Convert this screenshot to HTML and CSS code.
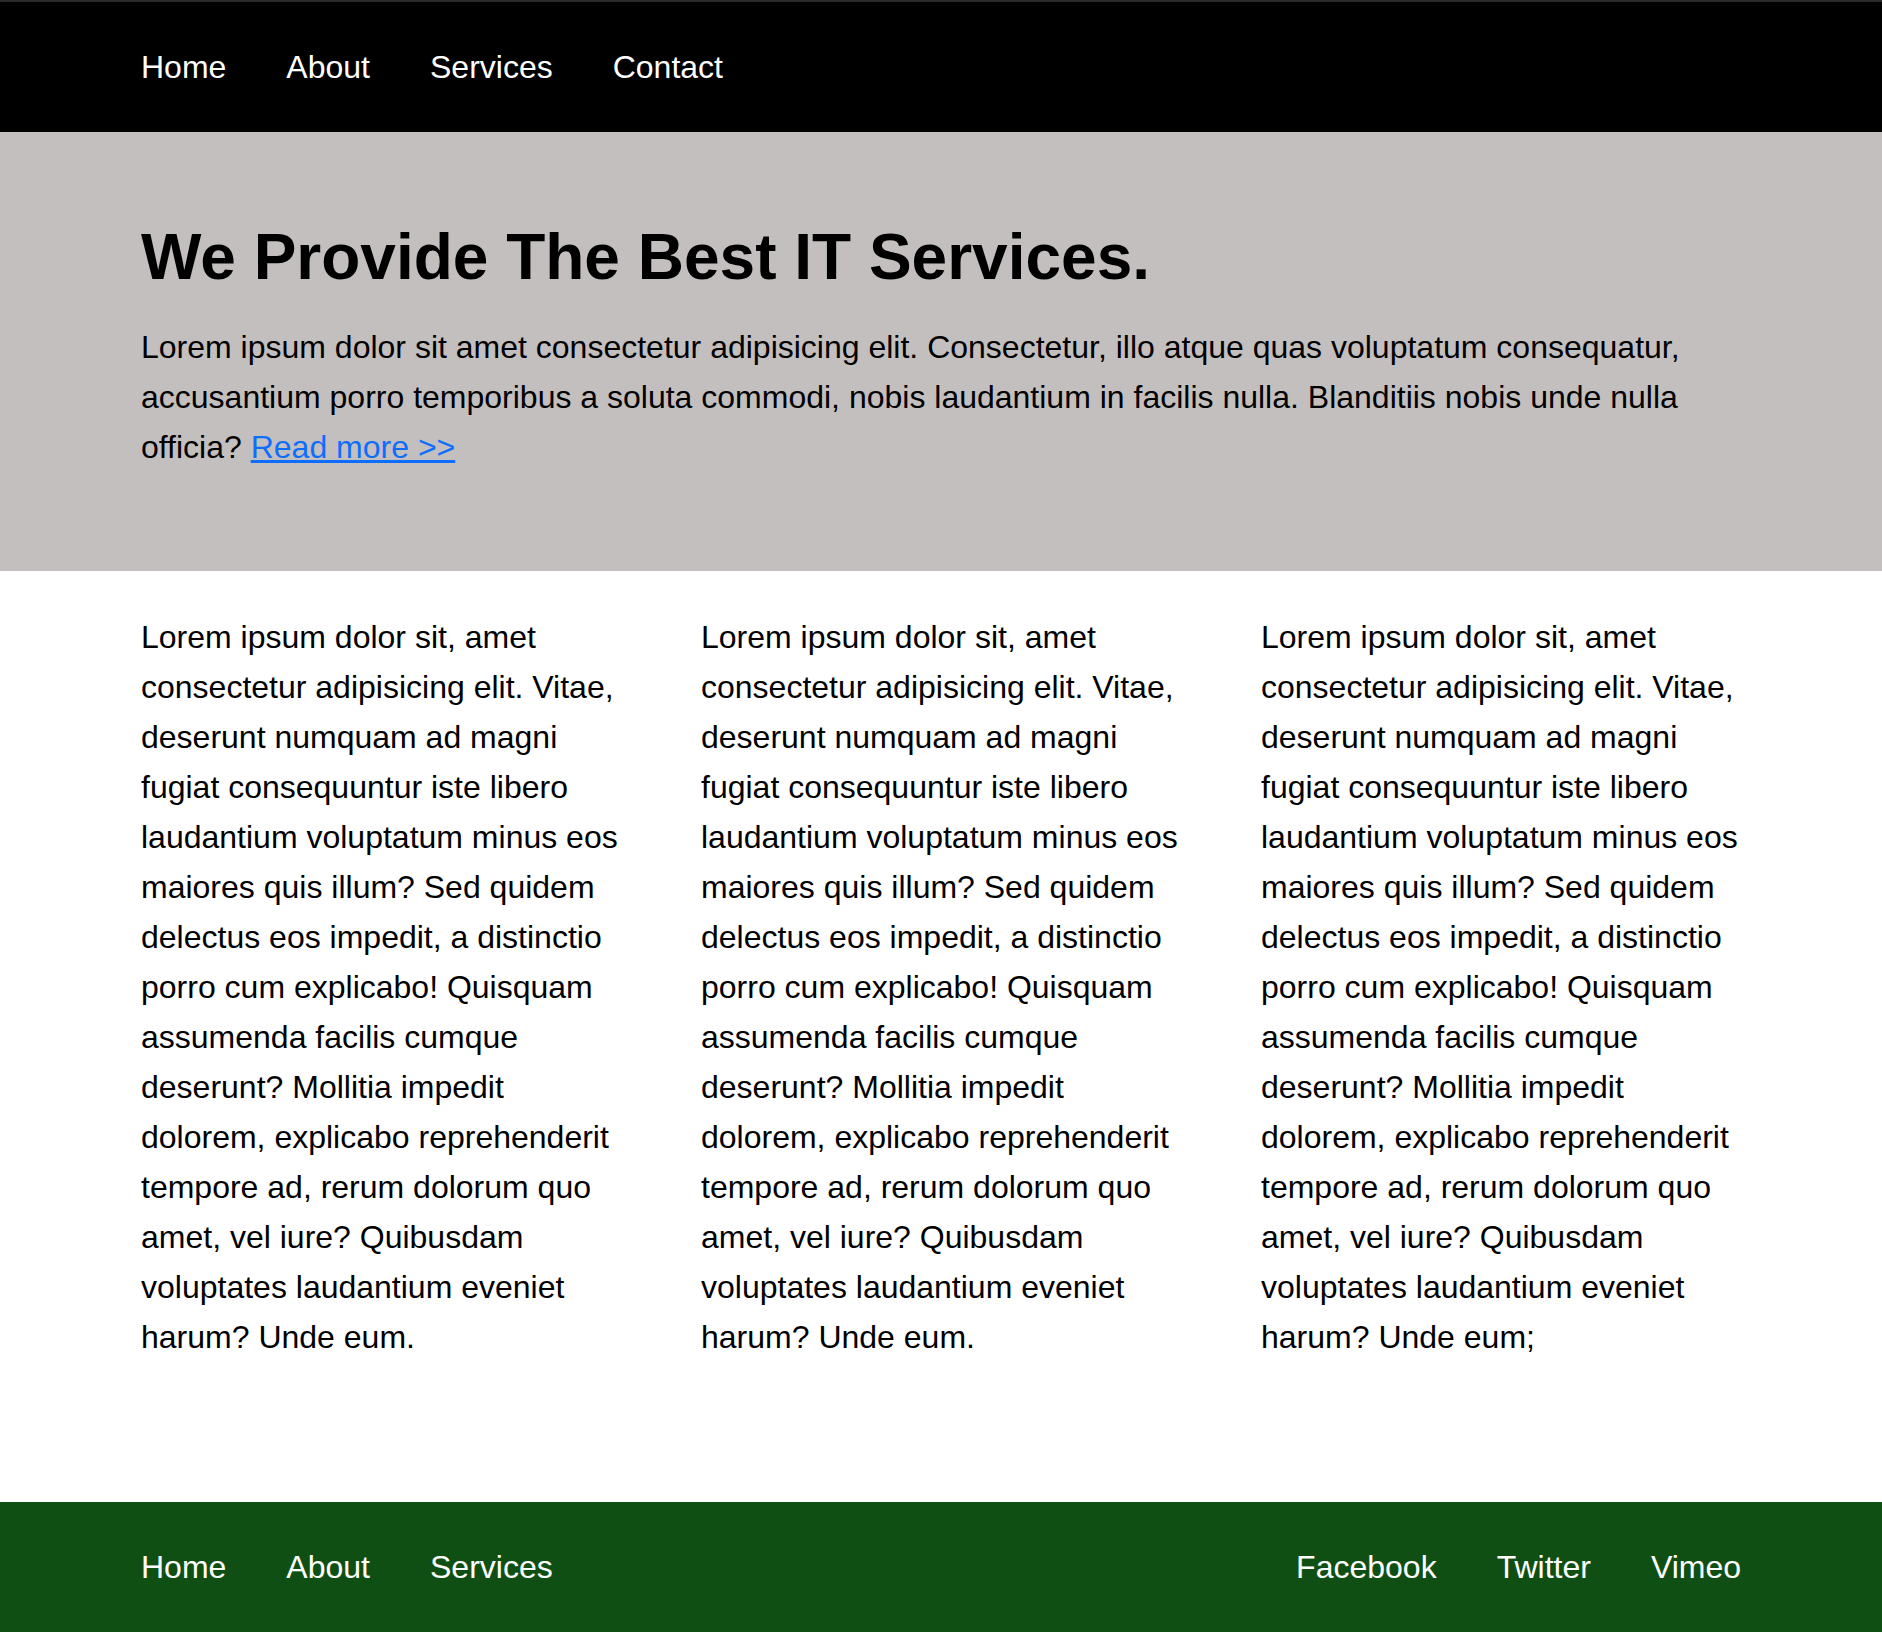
FILE: index.html
```html
<!DOCTYPE html>
<html lang="en">
<head>
<meta charset="utf-8">
<title>IT Services</title>
<link rel="stylesheet" href="styles.css">
</head>
<body>
<header class="topbar">
  <nav class="container nav">
    <a href="#">Home</a>
    <a href="#">About</a>
    <a href="#">Services</a>
    <a href="#">Contact</a>
  </nav>
</header>
<section class="hero">
  <div class="container">
    <h1 class="hero-title">We Provide The Best IT Services.</h1>
    <p class="hero-text">Lorem ipsum dolor sit amet consectetur adipisicing elit. Consectetur, illo atque quas voluptatum consequatur, accusantium porro temporibus a soluta commodi, nobis laudantium in facilis nulla. Blanditiis nobis unde nulla officia? <a class="read-more" href="#">Read more &gt;&gt;</a></p>
  </div>
</section>
<main class="container columns">
  <p class="col">Lorem ipsum dolor sit, amet consectetur adipisicing elit. Vitae, deserunt numquam ad magni fugiat consequuntur iste libero laudantium voluptatum minus eos maiores quis illum? Sed quidem delectus eos impedit, a distinctio porro cum explicabo! Quisquam assumenda facilis cumque deserunt? Mollitia impedit dolorem, explicabo reprehenderit tempore ad, rerum dolorum quo amet, vel iure? Quibusdam voluptates laudantium eveniet harum? Unde eum.</p>
  <p class="col">Lorem ipsum dolor sit, amet consectetur adipisicing elit. Vitae, deserunt numquam ad magni fugiat consequuntur iste libero laudantium voluptatum minus eos maiores quis illum? Sed quidem delectus eos impedit, a distinctio porro cum explicabo! Quisquam assumenda facilis cumque deserunt? Mollitia impedit dolorem, explicabo reprehenderit tempore ad, rerum dolorum quo amet, vel iure? Quibusdam voluptates laudantium eveniet harum? Unde eum.</p>
  <p class="col">Lorem ipsum dolor sit, amet consectetur adipisicing elit. Vitae, deserunt numquam ad magni fugiat consequuntur iste libero laudantium voluptatum minus eos maiores quis illum? Sed quidem delectus eos impedit, a distinctio porro cum explicabo! Quisquam assumenda facilis cumque deserunt? Mollitia impedit dolorem, explicabo reprehenderit tempore ad, rerum dolorum quo amet, vel iure? Quibusdam voluptates laudantium eveniet harum? Unde eum;</p>
</main>
<footer class="footer">
  <div class="container footer-inner">
    <nav class="footer-links">
      <a href="#">Home</a>
      <a href="#">About</a>
      <a href="#">Services</a>
    </nav>
    <nav class="footer-links">
      <a href="#">Facebook</a>
      <a href="#">Twitter</a>
      <a href="#">Vimeo</a>
    </nav>
  </div>
</footer>
</body>
</html>
```
FILE: styles.css
```css
body {
  margin: 0;
  font-family: "Liberation Sans", Arial, Helvetica, sans-serif;
  color: #000;
  background: #fff;
}

.container {
  width: 1600px;
  margin: 0 auto;
}

.topbar {
  background: #000;
  border-top: 2px solid #2b2b2b;
}

.nav {
  height: 130px;
  display: flex;
  align-items: center;
  gap: 60px;
}

.nav a,
.footer-links a {
  color: #fff;
  text-decoration: none;
  font-size: 32px;
}

.hero {
  background: #c4bfbf;
  padding: 88px 0 99px;
}

.hero-title {
  margin: 0 0 28px;
  font-size: 64px;
  font-weight: bold;
}

.hero-text {
  margin: 0;
  font-size: 32px;
  line-height: 50px;
}

.read-more {
  color: #0d6efd;
  text-decoration: underline;
}

.columns {
  display: grid;
  grid-template-columns: repeat(3, 480px);
  column-gap: 80px;
  padding: 41px 0 140px;
}

.col {
  margin: 0;
  font-size: 32px;
  line-height: 50px;
}

.footer {
  background: #104f14;
}

.footer-inner {
  height: 130px;
  display: flex;
  align-items: center;
  justify-content: space-between;
}

.footer-links {
  display: flex;
  gap: 60px;
}
```
